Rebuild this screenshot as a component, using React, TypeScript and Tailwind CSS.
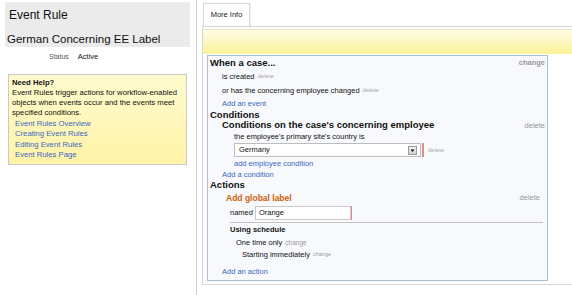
import React from "react";

const HELP_LINKS = [
  "Event Rules Overview",
  "Creating Event Rules",
  "Editing Event Rules",
  "Event Rules Page",
];

function Del({ className = "" }: { className?: string }) {
  return <span className={`ml-[3px] text-[6px] text-[#aaa] ${className}`}>delete</span>;
}

function Sidebar() {
  return (
    <div className="w-[197px] shrink-0 border-r border-[#cfcfcf] pl-[5px] pt-[2px]">
      <div className="h-[45px] w-[185px] bg-[#ebebeb]">
        <div className="h-[26px] pl-[4px] pt-[6px] text-[12px] leading-[14px] text-[#111]">Event Rule</div>
        <div className="pl-[2px] pt-[5px] text-[11.5px] leading-[12px] text-[#111]">German Concerning EE Label</div>
      </div>
      <div className="flex h-[20px] items-center pl-[44px] text-[7px]">
        <span className="text-[#555]">Status</span>
        <span className="ml-[9px] text-[7.5px] text-[#111]">Active</span>
      </div>
      <div className="ml-[3px] mt-[7px] h-[91px] w-[179px] border border-[#c9c9c9] bg-gradient-to-b from-[#fffbcf] to-[#fff3a6] pl-[3px] pt-[3px] text-[7.7px] leading-[10px] text-[#111]">
        <div className="font-bold">Need Help?</div>
        <div>
          Event Rules trigger actions for workflow-enabled objects when events occur and the events meet specified
          conditions.
        </div>
        <div className="pl-[3px] pt-[1px]">
          {HELP_LINKS.map((l) => (
            <div key={l} className="h-[10.3px] leading-[10.3px] text-[#3a67c4]">
              {l}
            </div>
          ))}
        </div>
      </div>
    </div>
  );
}

function Row({ h, className = "", children }: { h: string; className?: string; children?: React.ReactNode }) {
  return <div className={`flex items-center ${h} ${className}`}>{children}</div>;
}

function RuleBox() {
  return (
    <div className="ml-[4px] mr-[24px] mt-[1px] border border-[#a9bfd8] bg-[#f7f9fc] pl-[2px] pr-[2px] text-[7.5px] text-[#111]">
      <Row h="h-[14px]" className="justify-between">
        <span className="text-[9.5px] font-bold">When a case...</span>
        <span className="text-[7.5px] font-bold text-[#999]">change</span>
      </Row>
      <Row h="h-[13px]" className="pl-[12px]">
        is created <Del />
      </Row>
      <Row h="h-[15px]" className="pl-[12px]">
        or has the concerning employee changed <Del />
      </Row>
      <Row h="h-[12px]" className="pl-[12px] text-[#3a67c4]">
        Add an event
      </Row>
      <Row h="h-[10px]">
        <span className="text-[9.5px] font-bold">Conditions</span>
      </Row>
      <Row h="h-[11px]" className="justify-between pl-[12px]">
        <span className="text-[9.5px] font-bold">Conditions on the case's concerning employee</span>
        <span className="text-[7.5px] text-[#999]">delete</span>
      </Row>
      <Row h="h-[12px]" className="pl-[24px]">
        the employee's primary site's country is
      </Row>
      <Row h="h-[14px]" className="pl-[24px]">
        <div className="flex h-[14px] w-[187px] items-center border border-[#bdbdbd] bg-white pl-[4px] pr-[3px]">
          <span className="flex-1 text-[7.5px]">Germany</span>
          <span className="flex h-[9px] w-[9px] items-center justify-center border border-[#999] bg-gradient-to-b from-[#f4f4f4] to-[#cfcfcf]">
            <svg width="5" height="5" viewBox="0 0 5 5">
              <path d="M0.5 1.5 L4.5 1.5 L2.5 4 Z" fill="#111" />
            </svg>
          </span>
        </div>
        <div className="ml-[1px] h-[14px] w-[2px] bg-[#e08a8a]" />
        <Del className="ml-[4px]" />
      </Row>
      <Row h="h-[13px]" className="pl-[24px] text-[#3a67c4]">
        add employee condition
      </Row>
      <Row h="h-[10px]" className="pl-[12px] text-[#3a67c4]">
        Add a condition
      </Row>
      <Row h="h-[11px]">
        <span className="text-[9.5px] font-bold">Actions</span>
      </Row>
      <div className="pl-[16px] pr-[2px]">
        <Row h="h-[14px]" className="justify-between pr-[3px]">
          <span className="text-[8.5px] font-bold text-[#d2600c]">Add global label</span>
          <span className="text-[7.5px] text-[#999]">delete</span>
        </Row>
        <div className="pl-[4px]">
          <Row h="h-[15px]">
            <span>named</span>
            <div className="ml-[2px] flex h-[14px] w-[96px] items-center border border-[#c9c9c9] bg-white pl-[3px]">Orange</div>
            <div className="h-[14px] w-[1px] bg-[#e08a8a]" />
          </Row>
          <div className="mt-[2px] border-t border-[#c4c4c4]" />
          <Row h="h-[14px]">
            <span className="text-[7.5px] font-bold">Using schedule</span>
          </Row>
          <Row h="h-[12px]" className="pl-[6px]">
            One time only <span className="ml-[3px] text-[6.5px] text-[#999]">change</span>
          </Row>
          <Row h="h-[11px]" className="pl-[12px]">
            Starting immediately <span className="ml-[3px] text-[5.5px] text-[#999]">change</span>
          </Row>
        </div>
      </div>
      <div className="h-[20px] pl-[12px] pt-[6px] leading-[12px] text-[#3a67c4]">Add an action</div>
    </div>
  );
}

export default function App() {
  return (
    <div className="flex h-[295px] w-[572px] overflow-hidden bg-white font-['Liberation_Sans',Arial,sans-serif]">
      <Sidebar />
      <div className="flex-1 pl-[5px] pt-[3px]">
        <div className="ml-[1px] flex h-[23px] w-[47px] items-center justify-center border border-b-0 border-[#d6d6d6] text-[7.5px] text-[#222] shadow-[1px_0_1px_rgba(0,0,0,0.06)]">
          More Info
        </div>
        <div className="h-[259px] border-b border-l border-t border-[#d6d6d6] pt-[2px]">
          <div className="h-[25px] border-t border-[#e8e4c0] bg-gradient-to-b from-[#fffde6] to-[#fbf197]" />
          <RuleBox />
        </div>
      </div>
    </div>
  );
}
